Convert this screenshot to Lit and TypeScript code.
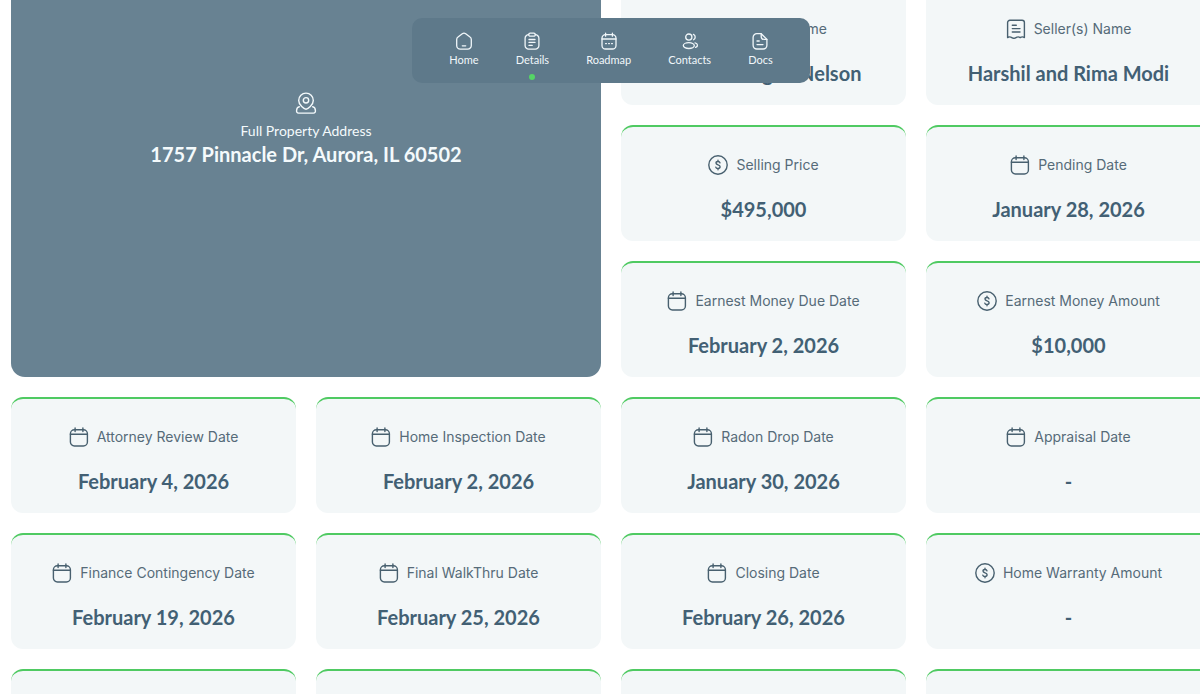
import { LitElement, html, css, svg, type TemplateResult } from "lit";
import { customElement, property } from "lit/decorators.js";

const icons: Record<string, TemplateResult> = {
  home: svg`<path d="M7.300 1.700 3 5A3 3 0 0 0 1.700 7.500v6A3.600 3.600 0 0 0 5.300 17.100h7.400a3.600 3.600 0 0 0 3.600-3.600v-6A3 3 0 0 0 15 5l-4.300-3.300a2.800 2.800 0 0 0-3.400 0Z"/><path d="M7.300 13.800h3.400"/>`,
  clipboard: svg`<path d="M5.700 2.700A3.600 3.600 0 0 0 2.100 6.300v7.200a3.600 3.600 0 0 0 3.600 3.600h6.600a3.600 3.600 0 0 0 3.600-3.600V6.300a3.600 3.600 0 0 0-3.600-3.600"/><rect x="5.700" y="1.200" width="6.600" height="3" rx="1.500"/><path d="M6 7.500h6M6 10.400h6M6 13.400h3.200"/>`,
  roadmap: svg`<rect x="2" y="2.700" width="14" height="14.300" rx="3.600"/><path d="M2 7h14M5.600 1.200v3M12.400 1.200v3M5.600 11.600h.8M8.600 11.600h.8M11.600 11.600h.8"/>`,
  contacts: svg`<circle cx="7.800" cy="5.100" r="3.100"/><ellipse cx="7.800" cy="13.600" rx="5.500" ry="2.900"/><path d="M12.400 2.300a3 3 0 0 1 .2 5.400M14 10.900c3 .5 3.300 3.500.6 4.500"/>`,
  doc: svg`<path d="M10.200 1.700H5.800A3.700 3.700 0 0 0 2.100 5.400v7.900A3.700 3.700 0 0 0 5.800 17h6.400a3.700 3.700 0 0 0 3.700-3.700V7.400Z"/><path d="M10.200 1.700v2.700a3 3 0 0 0 3 3h2.700M6 9h2.200M6 12.600h6"/>`,
  calendar: svg`<rect x="1.400" y="2.700" width="17" height="16.300" rx="4"/><path d="M1.400 7.200h17M6.100 1v3.500M13.900 1v3.500"/>`,
  dollar: svg`<circle cx="10" cy="10" r="9.200"/><path d="M12 7.800c-.2-.9-1-1.300-2-1.300-1.200 0-2 .6-2 1.600 0 2.400 4.100 1.200 4.100 3.700 0 1-.9 1.700-2.100 1.700s-2-.5-2.200-1.400M10 5.200v1.300M10 13.500v1.300"/>`,
  bill: svg`<path d="M3.900 1.300h12.200a2.300 2.300 0 0 1 2.300 2.300V18.600c-1.500-1-2.700-1-4.200 0-1.500-1-2.700-1-4.200 0-1.500 1-2.700 1-4.200 0-1.500-1-2.700-1-4.200 0V3.600A2.300 2.300 0 0 1 3.900 1.300Z"/><path d="M6.300 6.200h4M6.300 9.600h7.700M6.300 13h7.700"/>`,
  pin: svg`<path d="M11 17.300c-1.700 0-7.300-4.200-7.300-8.900a7.300 7.300 0 0 1 14.600 0c0 4.700-5.600 8.900-7.300 8.900Z"/><circle cx="11" cy="8.300" r="2.700"/><path d="M4.300 14.800C2.700 15 1.800 16.100 1.600 18.300c-.2 1.800.5 2.800 2 2.800h14.800c1.500 0 2.200-1 2-2.800-.2-2.200-1.100-3.300-2.700-3.500"/>`,
};

const icon = (name: string, size: number) =>
  html`<svg width=${size} height=${size} viewBox="0 0 ${size} ${size}" aria-hidden="true">${icons[name]}</svg>`;

const iconStyles = css`
  svg {
    display: block;
    flex: none;
    fill: none;
    stroke: currentColor;
    stroke-width: 1.4;
    stroke-linecap: round;
    stroke-linejoin: round;
  }
`;

@customElement("detail-card")
class DetailCard extends LitElement {
  @property() icon = "calendar";
  @property() label = "";
  @property() value = "";

  static styles = [
    iconStyles,
    css`
      :host {
        display: flex;
        flex-direction: column;
        align-items: center;
        gap: 20px;
        box-sizing: border-box;
        padding: 28px 8px 18px;
        border-top: 2px solid #4fca62;
        border-radius: 12px;
        background: #f3f7f8;
        color: #48606f;
        white-space: nowrap;
      }
      .label {
        display: flex;
        align-items: center;
        gap: 8px;
        font: 400 14px/20px Inter, sans-serif;
      }
      .label span {
        color: #566b79;
      }
      .value {
        font: 700 20px/28px Lato, sans-serif;
        color: #426074;
      }
    `,
  ];

  render() {
    return html`
      <div class="label">${icon(this.icon, 20)}<span>${this.label}</span></div>
      <div class="value">${this.value}</div>
    `;
  }
}

@customElement("site-nav")
class SiteNav extends LitElement {
  static styles = [
    iconStyles,
    css`
      :host {
        display: flex;
        gap: 37px;
        box-sizing: border-box;
        padding: 14px 37px 3px;
        border-radius: 10px;
        background: #5e798a;
      }
      a {
        display: flex;
        flex-direction: column;
        align-items: center;
        color: #f1f7fa;
        text-decoration: none;
        font: 400 11px/20px Lato, sans-serif;
      }
      svg {
        stroke-width: 1.3;
      }
      a::after {
        content: "";
        width: 6px;
        height: 6px;
        margin-top: 4px;
        border-radius: 50%;
      }
      a.active::after {
        background: #55d566;
      }
    `,
  ];

  render() {
    const items = [
      ["home", "Home"],
      ["clipboard", "Details"],
      ["roadmap", "Roadmap"],
      ["contacts", "Contacts"],
      ["doc", "Docs"],
    ];
    return items.map(
      ([glyph, text]) => html`<a href="#${text.toLowerCase()}" class=${text === "Details" ? "active" : ""}>${icon(glyph, 18)}<span>${text}</span></a>`
    );
  }
}

const cards = [
  ["bill", "Buyer(s) Name", "Erin & Morgan Nelson"],
  ["bill", "Seller(s) Name", "Harshil and Rima Modi"],
  ["dollar", "Selling Price", "$495,000"],
  ["calendar", "Pending Date", "January 28, 2026"],
  ["calendar", "Earnest Money Due Date", "February 2, 2026"],
  ["dollar", "Earnest Money Amount", "$10,000"],
  ["calendar", "Attorney Review Date", "February 4, 2026"],
  ["calendar", "Home Inspection Date", "February 2, 2026"],
  ["calendar", "Radon Drop Date", "January 30, 2026"],
  ["calendar", "Appraisal Date", "-"],
  ["calendar", "Finance Contingency Date", "February 19, 2026"],
  ["calendar", "Final WalkThru Date", "February 25, 2026"],
  ["calendar", "Closing Date", "February 26, 2026"],
  ["dollar", "Home Warranty Amount", "-"],
];

@customElement("app-root")
class AppRoot extends LitElement {
  static styles = [
    iconStyles,
    css`
      :host {
        display: block;
        position: relative;
        height: 100vh;
        overflow: hidden;
        background: #fff;
      }
      .navbar {
        position: absolute;
        z-index: 1;
        top: 18px;
        left: 0;
        right: -22px;
        display: flex;
        justify-content: center;
      }
      .grid {
        display: grid;
        grid-template-columns: repeat(4, minmax(0, 1fr));
        grid-auto-rows: 116px;
        gap: 20px;
        margin: -11px -11px 0 11px;
      }
      .hero {
        grid-column: span 2;
        grid-row: span 3;
        display: flex;
        flex-direction: column;
        align-items: center;
        box-sizing: border-box;
        padding-top: 103px;
        border-radius: 0 0 14px 14px;
        background: #688292;
        color: #f4fafc;
      }
      .hero-label {
        margin-top: 7px;
        font: 400 14px/20px Lato, sans-serif;
      }
      .hero-value {
        margin: 0;
        font: 700 20px/26px Lato, sans-serif;
      }
    `,
  ];

  render() {
    return html`
      <div class="navbar"><site-nav role="navigation"></site-nav></div>
      <main class="grid">
        <section class="hero">
          ${icon("pin", 22)}
          <div class="hero-label">Full Property Address</div>
          <h1 class="hero-value">1757 Pinnacle Dr, Aurora, IL 60502</h1>
        </section>
        ${cards.map(([glyph, label, value]) => html`<detail-card icon=${glyph} label=${label} value=${value}></detail-card>`)}
        ${[0, 1, 2, 3].map(() => html`<detail-card icon=""></detail-card>`)}
      </main>
    `;
  }
}
